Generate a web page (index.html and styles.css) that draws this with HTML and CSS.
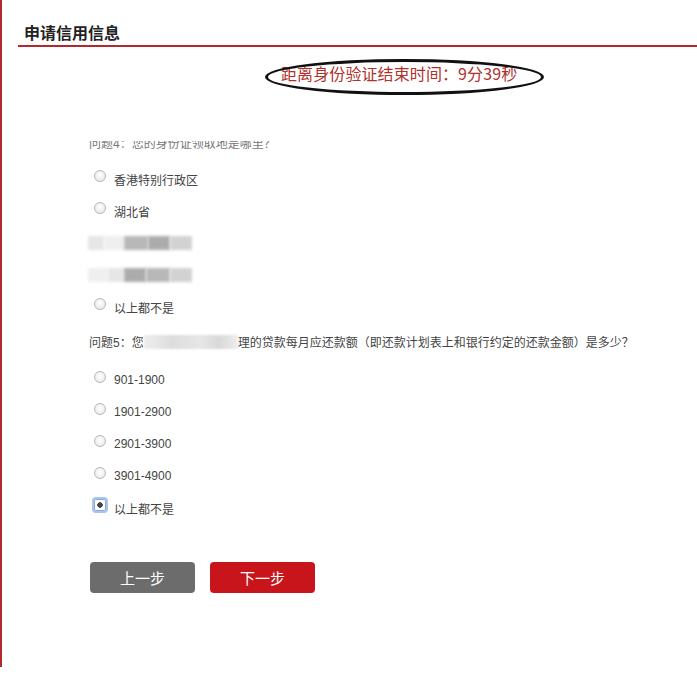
FILE: index.html
```html
<!DOCTYPE html>
<html lang="zh-CN">
<head>
  <meta charset="UTF-8" />
  <title>申请信用信息</title>
  <link rel="stylesheet" href="styles.css">
</head>
<body>
  <div class="pagina">
    <h2 class="titulo">申请信用信息</h2>

    <div class="contador">
      <span class="contador-texto">距离身份验证结束时间：9分39秒</span>
      <span class="marca"></span>
    </div>

    <div class="perguntas">
      <!-- a primeira linha fica cortada pela rolagem -->
      <div class="pergunta-cortada">
        <p>问题4：您的身份证领取地是哪里？</p>
      </div>
      <label class="opcao"><input type="radio" name="q4" /> 香港特别行政区</label>
      <label class="opcao"><input type="radio" name="q4" /> 湖北省</label>
      <div class="opcao borrado">
        <span class="pixel p1"></span><span class="pixel p2"></span><span class="pixel p3"></span><span class="pixel p4"></span><span class="pixel p5"></span>
      </div>
      <div class="opcao borrado">
        <span class="pixel p2"></span><span class="pixel p1"></span><span class="pixel p4"></span><span class="pixel p3"></span><span class="pixel p5"></span>
      </div>
      <label class="opcao"><input type="radio" name="q4" /> 以上都不是</label>

      <p class="pergunta">问题5：您<span class="oculto"></span>理的贷款每月应还款额（即还款计划表上和银行约定的还款金额）是多少？</p>
      <label class="opcao"><input type="radio" name="q5" /> 901-1900</label>
      <label class="opcao"><input type="radio" name="q5" /> 1901-2900</label>
      <label class="opcao"><input type="radio" name="q5" /> 2901-3900</label>
      <label class="opcao"><input type="radio" name="q5" /> 3901-4900</label>
      <label class="opcao"><input type="radio" name="q5" checked /> 以上都不是</label>
    </div>

    <div class="botoes">
      <button type="button" class="botao botao-voltar">上一步</button>
      <button type="button" class="botao botao-proximo">下一步</button>
    </div>
  </div>
</body>
</html>
```

FILE: styles.css
```css
* {
  box-sizing: border-box;
  margin: 0;
  padding: 0;
}

body {
  background: #fff;
  font-family: "Liberation Sans", "Noto Sans CJK SC", sans-serif;
  color: #444;
  font-size: 12px;
}

.pagina {
  width: 697px;
  height: 667px;
  border-left: 2px solid #b3282d;
  padding-left: 16px;
  padding-top: 21px;
}

.titulo {
  font-family: "Noto Sans CJK SC", sans-serif;
  font-size: 16px;
  font-weight: bold;
  color: #222;
  line-height: 22px;
  padding-left: 6px;
  padding-bottom: 2px;
  border-bottom: 2px solid #b3282d;
}

/* contador de tempo */
.contador {
  position: relative;
  height: 94px;
  padding-left: 263px;
  padding-top: 14px;
}

.contador-texto {
  font-family: "Noto Sans CJK SC", sans-serif;
  font-size: 16px;
  line-height: 24px;
  color: #b0302b;
  letter-spacing: 0.1px;
}

.marca {
  position: absolute;
  left: 247px;
  top: 12px;
  width: 279px;
  height: 36px;
  border: 3px solid #111;
  border-radius: 50%;
}

/* perguntas */
.perguntas {
  padding-left: 71px;
}

.pergunta-cortada {
  height: 10px;
  overflow: hidden;
  margin-bottom: 12px;
  color: #777;
}

.pergunta-cortada p {
  line-height: 18px;
  margin-top: -6px;
}

.pergunta {
  line-height: 18px;
  padding-top: 11px;
  padding-bottom: 12px;
}

.opcao {
  display: flex;
  align-items: center;
  height: 32px;
  padding-left: 5px;
}

.opcao input {
  appearance: none;
  width: 12px;
  height: 12px;
  border-radius: 50%;
  border: 1px solid #b8b8b8;
  background: radial-gradient(circle at 50% 40%, #fff 0%, #e4e4e4 100%);
  margin-right: 8px;
  position: relative;
  top: -3px;
}

.opcao input:checked {
  box-shadow: 0 0 0 2px #aac4ee;
  border-radius: 2px;
  border-color: #8aa8d8;
  background: radial-gradient(circle, #444 0 2.5px, #fff 3px);
}

.borrado {
  padding-left: 0;
  margin-left: -1px;
}

.pixel {
  display: inline-block;
  height: 14px;
  filter: blur(1.5px);
}

.p1 { width: 16px; background: #e6e6e6; }
.p2 { width: 20px; background: #efefef; }
.p3 { width: 24px; background: #b8b8b8; }
.p4 { width: 22px; background: #acacac; }
.p5 { width: 22px; background: #d2d2d2; }

.oculto {
  display: inline-block;
  width: 94px;
  height: 14px;
  vertical-align: -2px;
  background: linear-gradient(90deg, #eee, #ddd 30%, #e6e6e6 60%, #d8d8d8 80%, #eee);
  filter: blur(1px);
}

/* botões */
.botoes {
  display: flex;
  gap: 15px;
  padding-left: 72px;
  margin-top: 38px;
}

.botao {
  width: 105px;
  height: 31px;
  border: none;
  border-radius: 4px;
  color: #fff;
  font-family: "Noto Sans CJK SC", sans-serif;
  font-size: 15px;
}

.botao-voltar {
  background: #6c6c6c;
}

.botao-proximo {
  background: #c8151b;
}
```
